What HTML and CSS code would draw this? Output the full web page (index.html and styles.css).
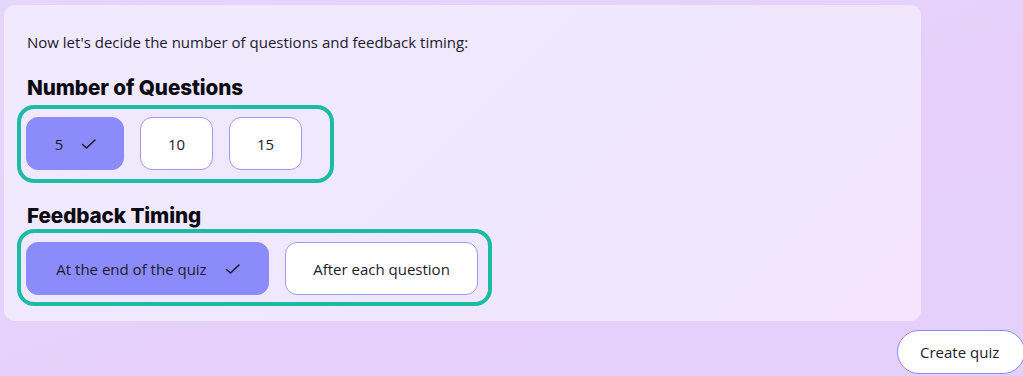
FILE: index.html
```html
<!DOCTYPE html>
<html>
<head>
<meta charset="utf-8">
<link rel="stylesheet" href="styles.css">
</head>
<body>
<div class="page">
  <div class="card">
    <p class="intro">Now let's decide the number of questions and feedback timing:</p>
    <h2 class="heading">Number of Questions</h2>
    <div class="group group-count">
      <button class="opt opt-sel opt-num-sel">5 <svg class="check" viewBox="0 0 16 12" width="16" height="12"><path d="M1.5 6.5 L5.5 10 L14 2" fill="none" stroke="#1c1b2e" stroke-width="1.6" stroke-linecap="round" stroke-linejoin="round"/></svg></button>
      <button class="opt opt-num">10</button>
      <button class="opt opt-num">15</button>
    </div>
    <h2 class="heading heading-2">Feedback Timing</h2>
    <div class="group group-timing">
      <button class="opt opt-sel opt-end">At the end of the quiz <svg class="check" viewBox="0 0 16 12" width="16" height="12"><path d="M1.5 6.5 L5.5 10 L14 2" fill="none" stroke="#1c1b2e" stroke-width="1.6" stroke-linecap="round" stroke-linejoin="round"/></svg></button>
      <button class="opt opt-after">After each question</button>
    </div>
  </div>
  <div class="footer">
    <button class="create">Create quiz</button>
  </div>
</div>
</body>
</html>
```
FILE: styles.css
```css
* { box-sizing: border-box; }
html, body { margin: 0; padding: 0; }
body {
  width: 1023px;
  height: 376px;
  overflow: hidden;
  background: linear-gradient(160deg, #e5d6fb 0%, #e6d0fb 60%, #e3d0fa 100%);
  font-family: "Open Sans", "Liberation Sans", sans-serif;
  color: #1c1b2e;
}
.page { padding: 5px 0 0 4px; }
.card {
  width: 917px;
  height: 316px;
  border-radius: 11px;
  background: linear-gradient(135deg, #f1e9fe 0%, #efe7fd 60%, #f4e4fc 100%);
  padding: 27px 0 0 23px;
}
.intro {
  margin: 0;
  font-size: 15px;
  line-height: 20px;
}
.heading {
  margin: 24px 0 0 0;
  font-family: "Inter", "Liberation Sans", sans-serif;
  font-weight: 800;
  font-size: 20.7px;
  line-height: 24px;
  letter-spacing: -0.1px;
  color: #0a0a12;
}
.heading-2 { margin-top: 21px; }
.group {
  display: flex;
  gap: 16px;
  border: 4px solid #1cbca4;
  border-radius: 17px;
  margin-left: -10px;
}
.group-count { width: 317px; margin-top: 5px; padding: 8px 5px 9px; }
.group-timing { width: 475px; margin-top: 1px; padding: 9px 5px 7px; }
.opt {
  height: 53px;
  border-radius: 12px;
  border: 1px solid #9d98f7;
  background: #ffffff;
  font-family: "Open Sans", "Liberation Sans", sans-serif;
  font-size: 15px;
  color: #1c1b2e;
  display: flex;
  align-items: center;
  justify-content: center;
  padding: 0;
  gap: 16px;
}
.opt-sel { background: #8c8bfb; border-color: #8c8bfb; }
.opt-num-sel { width: 98px; gap: 18px; padding-left: 2px; }
.opt-num { width: 73px; }
.opt-end { width: 243px; gap: 18px; padding-left: 2px; }
.opt-after { width: 193px; }
.check { display: block; }
.footer {
  display: flex;
  justify-content: flex-end;
  padding-top: 9px;
}
.create {
  width: 128px;
  height: 44px;
  margin-right: -2px;
  border-radius: 22px;
  border: 1.5px solid #8c8bfb;
  background: #ffffff;
  font-family: "Open Sans", "Liberation Sans", sans-serif;
  font-size: 15px;
  color: #1c1b2e;
  text-align: left;
  padding: 0 0 0 22px;
}
```
